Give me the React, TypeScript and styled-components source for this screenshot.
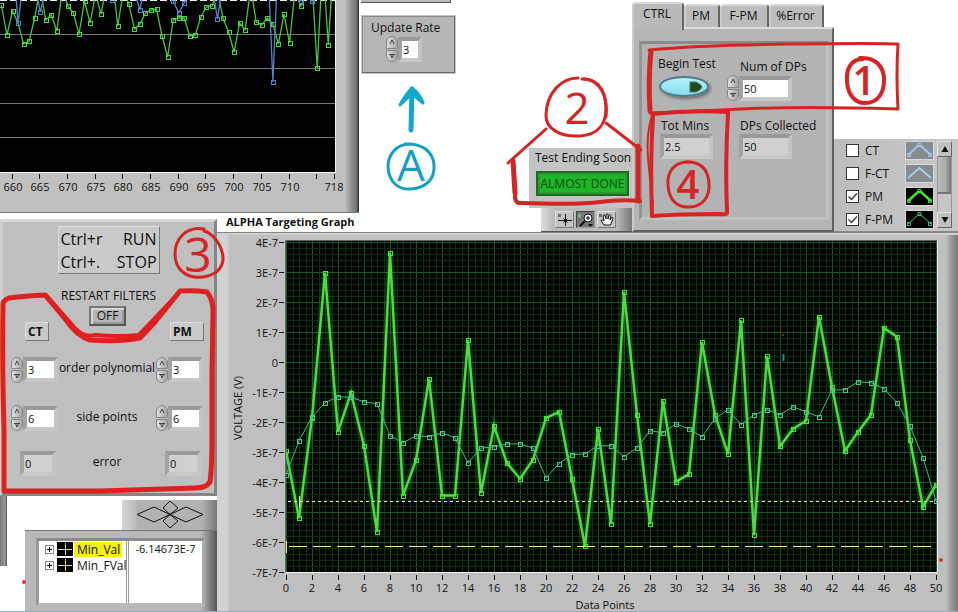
import React, { useState } from "react";
import styled, { createGlobalStyle, css } from "styled-components";

const Global = createGlobalStyle`
  *, *::before, *::after { box-sizing: border-box; }
  body { margin: 0; background: #fff; }
  body, button, input { font-family: "Open Sans", "Noto Sans", sans-serif; font-size: 12px; line-height: 16px; color: #111; }
  button { padding: 0; cursor: pointer; }
`;

const Page = styled.main`
  position: relative;
  display: grid;
  grid-template-columns: 217px 144px minmax(597px, 1fr);
  grid-template-rows: 213px 6px 13px 1fr;
  min-height: 100vh;
  overflow: hidden;
  border-bottom: 1px solid #8fb0d0;
`;

const StripPanel = styled.section`
  grid-column: 1 / 3;
  grid-row: 1;
  margin-right: 2px;
  background: linear-gradient(to right, #c0c0c0 345px, #8c8c8c 352px, #707070 357px, #333 358px);
  border-bottom: 1px solid #777;
`;

const Title = styled.h2`
  grid-column: 2 / 4;
  grid-row: 2 / 4;
  margin: 0;
  padding-left: 9px;
  font-size: 11px;
  line-height: 17px;
  font-weight: 700;
`;

const Upper = styled.div`
  grid-column: 3;
  grid-row: 1 / 4;
  display: flex;
  align-items: flex-end;
  z-index: 1;
`;

const RateColumn = styled.div`
  width: 168px;
  align-self: stretch;
`;

const Sliver = styled.div`
  width: 90px;
  height: 3px;
  margin-bottom: 12px;
  background: #bbb;
  border-bottom: 1px solid #555;
  border-right: 1px solid #555;
`;

const RateBox = styled.section`
  width: 95px;
  height: 59px;
  padding: 3px 8px;
  background: #b5b5b5;
  border: 2px solid;
  border-color: #8a8a8a #6a6a6a #6a6a6a #8a8a8a;
  outline: 1px solid #c4c4c4;
  outline-offset: -1px;
`;

const Label = styled.label<{ $indent?: number }>`
  display: block;
  padding-left: ${(p) => p.$indent ?? 0}px;
  font-size: 12px;
  line-height: 16px;
  white-space: nowrap;
`;

const FieldRow = styled.div<{ $indent?: number }>`
  display: flex;
  align-items: center;
  margin-left: ${(p) => p.$indent ?? 0}px;
`;

const Spinner = styled.span`
  display: flex;
  flex-direction: column;
  gap: 1px;
  width: 12px;
  height: 26px;
`;

const SpinButton = styled.button<{ $down?: boolean }>`
  flex: 1;
  display: flex;
  align-items: center;
  justify-content: center;
  border: 1px solid #858585;
  background: linear-gradient(to right, #ddd, #a5a5a5);
  border-radius: ${(p) => (p.$down ? "1px 1px 6px 6px" : "6px 6px 1px 1px")};
`;

const Input = styled.input<{ $width: number }>`
  width: ${(p) => p.$width}px;
  height: 25px;
  padding: 0 1px;
  font-size: 11px;
  border: 4px solid;
  border-color: #999 #c4c4c4 #c8c8c8 #a2a2a2;
  background: #fff;
  outline: none;
  &:read-only { background: #d0d0d0; }
`;

const StatusColumn = styled.div`
  width: 103px;
  display: flex;
  flex-direction: column;
  align-items: flex-end;
`;

const StatusBox = styled.section`
  width: 103px;
  height: 60px;
  padding: 2px 0 0 6px;
  background: #c3c3c3;
`;

const Led = styled.output`
  display: block;
  width: 93px;
  height: 25px;
  margin: 5px 0 0 1px;
  border: 2px solid #1d6a20;
  background: #20b42a;
  box-shadow: inset 0 0 0 2px #2a9a2e;
  color: #0b4c12;
  line-height: 21px;
  font-size: 12px;
  text-align: center;
  white-space: nowrap;
`;

const Palette = styled.div`
  display: flex;
  gap: 2px;
  width: 91px;
  height: 24px;
  padding: 3px 14px;
  background: linear-gradient(to right, #ddd, #bbb 12px, #bbb 75px, #777);
  border-bottom: 1px solid #555;
`;

const ToolButton = styled.button<{ $on?: boolean }>`
  display: flex;
  width: 19px;
  height: 17px;
  border: 1px solid;
  border-color: ${(p) => (p.$on ? "#444 #999 #999 #444" : "#ddd #777 #777 #ddd")};
  background: ${(p) => (p.$on ? "#777" : "#c4c4c4")};
`;

const TabsColumn = styled.section`
  width: 202px;
  height: 230px;
  display: flex;
  flex-direction: column;
`;

const TabList = styled.div`
  display: flex;
  align-items: flex-end;
  height: 25px;
`;

const Tab = styled.button<{ $width: number; $active?: boolean }>`
  width: ${(p) => p.$width}px;
  height: ${(p) => (p.$active ? 28 : 23)}px;
  align-self: ${(p) => (p.$active ? "flex-start" : "flex-end")};
  padding-right: 2px;
  padding-bottom: ${(p) => (p.$active ? 6 : 1)}px;
  border: solid;
  border-width: 2px 2px 0 2px;
  border-color: #d8d8d8 #666 #d8d8d8 #ccc;
  border-radius: 4px 3px 0 0;
  background: #bcbcbc;
  ${(p) => p.$active && css`z-index: 1; background: #b9b9b9;`}
`;

const TabPanel = styled.div`
  flex: 1;
  padding: 12px 3px 10px 5px;
  background: #b5b5b5;
  border: 2px solid;
  border-color: #ddd #606060 #606060 #ccc;
`;

const TabInner = styled.div`
  display: grid;
  grid-template-columns: 70px 1fr;
  grid-template-rows: 59px 1fr;
  height: 100%;
  padding: 12px 0 0 15px;
  background: #b3b3b3;
  border: 3px solid;
  border-color: #8a8a8a #c2c2c2 #c2c2c2 #949494;
`;

const Cell = styled.div<{ $top?: number }>`
  padding-top: ${(p) => p.$top ?? 0}px;
`;

const OvalButton = styled.button`
  display: flex;
  align-items: center;
  justify-content: flex-end;
  width: 50px;
  height: 21px;
  margin: 4px 0 0 2px;
  padding-right: 4px;
  border: 2px solid #527a82;
  border-radius: 50%;
  background: linear-gradient(#b5f3fb, #83dcec);
  box-shadow: 2px 2px 3px #6f6f6f;
`;

const Legend = styled.section`
  flex: 1;
  display: flex;
  height: 93px;
  background: linear-gradient(to right, #bdbdbd, #c8c8c8);
  border-bottom: 1px solid #888;
`;

const LegendList = styled.div`
  flex: 1;
  padding: 0 3px 0 12px;
`;

const LegendRow = styled.label`
  display: grid;
  grid-template-columns: 19px 1fr 29px;
  align-items: center;
  height: 23px;
`;

const Check = styled.input`
  appearance: none;
  width: 13px;
  height: 13px;
  margin: 0;
  border: 1px solid #333;
  background: #fff;
  &:checked {
    background: #fff url("data:image/svg+xml,%3Csvg xmlns='http://www.w3.org/2000/svg' viewBox='0 0 11 11'%3E%3Cpath d='M1.500 5.500 4.500 8.500 10 2.500' fill='none' stroke='%23333' stroke-width='1.300'/%3E%3C/svg%3E");
  }
`;

const Scroll = styled.div`
  display: flex;
  flex-direction: column;
  width: 21px;
  padding: 2px 6px 3px 0;
`;

const ScrollButton = styled.button`
  display: flex;
  align-items: center;
  justify-content: center;
  height: 16px;
  border: 1px solid;
  border-color: #e2e2e2 #666 #666 #e2e2e2;
  background: #c0c0c0;
`;

const Trough = styled.div`
  flex: 1;
  background: #c6c6c6;
  border: solid #999;
  border-width: 0 1px;
`;

const Thumb = styled.div`
  height: 37px;
  background: linear-gradient(to right, #bbb, #aaa 60%, #777);
  border-bottom: 2px solid #777;
`;

const LeftColumn = styled.div`
  grid-column: 1;
  grid-row: 3 / 5;
  display: flex;
  flex-direction: column;
`;

const FilterPanel = styled.section`
  display: flex;
  flex-direction: column;
  align-items: center;
  height: 277px;
  padding: 4px 10px 0 8px;
  background: #bfbfbf;
  border: 3px solid;
  border-color: #d8d8d8 #858585 #858585 #cfcfcf;
`;

const Keys = styled.div`
  display: grid;
  grid-template-columns: auto auto;
  justify-content: space-between;
  width: 102px;
  height: 48px;
  margin-left: 2px;
  padding: 1px 2px;
  font-size: 16px;
  line-height: 23px;
  background: #cacaca;
  border: 1px solid;
  border-color: #e2e2e2 #777 #777 #ddd;
  white-space: nowrap;
  & > :nth-child(even) { text-align: right; }
`;

const FilterHeading = styled.div`
  margin-top: 14px;
  margin-left: 2px;
  white-space: nowrap;
`;

const OffButton = styled.button`
  width: 37px;
  height: 20px;
  margin-top: 2px;
  border: 2px solid;
  border-color: #777 #555 #555 #777;
  box-shadow: inset 1px 1px 0 1px #d5d5d5, inset -1px -1px 0 1px #999;
  background: #b5b5b5;
`;

const Tags = styled.div`
  display: flex;
  justify-content: space-between;
  width: 100%;
  padding: 0 0 0 14px;
  margin-top: -4px;
`;

const Tag = styled.strong<{ $width: number }>`
  width: ${(p) => p.$width}px;
  height: 19px;
  padding-left: 2px;
  font-size: 12px;
  line-height: 17px;
  background: #cacaca;
  border: 1px solid;
  border-color: #ddd #777 #777 #ddd;
`;

const FilterGrid = styled.div`
  display: grid;
  grid-template-columns: 47px 1fr 48px;
  grid-template-rows: 49px 48px 42px;
  align-items: center;
  width: 100%;
  margin-top: 4px;
  text-align: center;
  white-space: nowrap;
`;

const FilterLabel = styled.span`
  line-height: 16px;
  padding-bottom: 3px;
`;

const Lower = styled.div`
  flex: 1;
  display: flex;
  justify-content: space-between;
`;

const Rail = styled.div`
  width: 7px;
  height: 70px;
  background: linear-gradient(to right, #777, #999 5px, #555);
`;

const CursorColumn = styled.section`
  display: flex;
  flex-direction: column;
  align-items: flex-end;
  width: 192px;
  padding-top: 4px;
`;

const Pad = styled.div`
  display: flex;
  justify-content: center;
  width: 95px;
  height: 30px;
  background: linear-gradient(to right, #d5d5d5, #bcbcbc 14px, #b2b2b2 15px, #b2b2b2 80px, #777);
`;

const CursorBox = styled.div`
  flex: 1;
  width: 100%;
  padding: 7px 12px 5px 11px;
  background: linear-gradient(to right, #b8b8b8 176px, #555);
  border-top: 1px solid #777;
`;

const CursorScreen = styled.div`
  height: 100%;
  background: #fff;
  border: 3px solid;
  border-color: #8a8a8a #aaa #bbb #999;
`;

const CursorTable = styled.table`
  width: 100%;
  height: 100%;
  border-collapse: collapse;
  table-layout: fixed;
  td { padding: 0; height: 16px; font-size: 11px; white-space: nowrap; overflow: hidden; vertical-align: top; }
  td:first-child { width: 88px; border-right: 3px double #999; }
  td:last-child { padding-left: 7px; }
  tr:last-child td { height: 100%; }
`;

const TreeItem = styled.div`
  display: flex;
  align-items: center;
  padding-left: 6px;
  height: 16px;
`;

const Expander = styled.button`
  width: 9px;
  height: 9px;
  flex: none;
  border: 1px solid #888;
  background: #fff;
  display: flex;
`;

const Name = styled.span<{ $on?: boolean }>`
  padding: 0 2px 0 3px;
  margin-left: 1px;
  font-size: 12px;
  line-height: 15px;
  background: ${(p) => (p.$on ? "#f8f010" : "none")};
`;

const GraphPanel = styled.section`
  grid-column: 2 / 4;
  grid-row: 4;
  background: linear-gradient(to right, #d2d2d2, #d2d2d2 10px, #bfbfbf 13px, #bfbfbf calc(100% - 12px), #a0a0a0 calc(100% - 8px), #777);
  border-top: 1px solid #888;
  box-shadow: inset 0 2px 0 #d0d0d0;
`;

const Svg = styled.svg`
  display: block;
  width: 100%;
  height: auto;
  overflow: visible;
`;

const Icon = styled.svg`
  display: block;
  flex: none;
`;

const Ink = styled.svg`
  position: absolute;
  top: 0;
  left: 0;
  z-index: 3;
  pointer-events: none;
`;

const pm = [
  -2.97, -5.21, -1.86, 2.97, -2.33, -1.03, -2.79, -5.67, 3.64, -4.46, -3.27, -0.56, -4.45, -4.45, 0.74, -4.37, -2.14,
  -3.37, -3.89, -3.26, -1.87, -1.66, -3.89, -6.14, -2.23, -5.41, 2.34, -1.76, -5.41, -1.29, -3.99, -3.74, 0.66, -1.76,
  -3.07, 1.39, -5.77, 0.19, -2.81, -2.23, -1.96, 1.51, -0.83, -2.96, -2.33, -1.76, 1.13, 0.84, -2.61, -4.83, -4.09,
];
const fpm = [
  -3.76, -2.63, -1.83, -1.36, -1.16, -1.17, -1.33, -1.39, -2.46, -2.69, -2.46, -2.49, -2.36, -2.53, -3.36, -2.87, -2.83,
  -2.73, -2.73, -2.87, -3.86, -3.39, -3.09, -3.06, -2.79, -2.79, -3.16, -2.86, -2.29, -2.36, -2.06, -2.23, -2.49, -1.89,
  -1.59, -2.09, -1.76, -1.59, -1.76, -1.49, -1.66, -1.83, -0.93, -0.93, -0.66, -0.69, -0.89, -1.36, -2.13, -3.19, -4.63,
];

const stripGreen = [
  5, 35, 11, 23, 44, 41, 18, -12, 20, 15, 31, -10, 6, 13, 34, 1, 23, -6, 14, -16, -24, 26, -9, 4, 29, 24, 13, 10, 9, 36,
  57, 20, 18, 18, 36, 35, 17, 7, 6, -8, 18, 32, 52, 23, 30, -12, 22, 25, 18, 24, 44, 14, 43, -10, 6, -4, -24, 68, -40,
  45, -40,
];
const stripBlue: number[][] = [
  [660, -50, 661, 23, 662, -20],
  [664, -20, 665, 12, 666, -10],
  [677, -4, 678, 0, 679, -5],
  [682, -8, 683, 10, 684, -20],
  [688, -6, 689, 1, 690, 13, 691, 3, 692, -8],
  [696, -16, 697, 19, 698, -18],
  [706, -50, 707, 82, 708, -50],
  [711, -5, 712, 1, 713, -5, 714, 1, 715, -9],
];

const range = (n: number) => Array.from({ length: n }, (_, i) => i);
const gx = (n: number) => 69 + n * 13;
const gy = (v: number) => 129 - v * 30;
const sx = (n: number) => 12.5 + (n - 660) * 5.54;

function StripChart() {
  const green = stripGreen.map((y, i) => [sx(658 + i), y]);
  return (
    <Svg viewBox="0 0 359 212" role="img" aria-label="Voltage history">
      <defs>
        <clipPath id="strip"><rect x="0" y="0" width="335" height="172" /></clipPath>
      </defs>
      <rect x="0" y="0" width="335" height="172" fill="#000" />
      <g clipPath="url(#strip)" shapeRendering="crispEdges">
        {[34.5, 68.5, 103.5, 137.5].map((y) => <path key={y} d={`M0 ${y}H335`} stroke="#777" />)}
        <path d="M0 .5H335" stroke="#eee" strokeDasharray="7 3" />
      </g>
      <g clipPath="url(#strip)" fill="none">
        <polyline points={green.map((p) => p.join()).join(" ")} stroke="#4cc344" strokeWidth="1.3" />
        {green.map(([x, y]) => <rect key={x} x={Math.round(x) - 2 + 0.5} y={y - 1.5} width="4" height="4" stroke="#4fd545" />)}
        {stripBlue.map((s) => {
          const pts = range(s.length / 2).map((i) => [sx(s[i * 2]), s[i * 2 + 1]]);
          return (
            <g key={s[0]} stroke="#5684c8">
              <polyline points={pts.map((p) => p.join()).join(" ")} strokeWidth="1.3" />
              {pts.map(([x, y]) => <rect key={x} x={Math.round(x) - 1.5} y={y - 1.5} width="4" height="4" />)}
            </g>
          );
        })}
      </g>
      <path d="M0 172.5H335.5V0" stroke="#f2f2f2" fill="none" />
      {range(12).map((i) => <path key={i} d={`M${Math.round(sx(660 + i * 5)) - 0.5} 174v5`} stroke="#111" />)}
      <path d="M334.5 174v5" stroke="#111" />
      <g fontSize="11" textAnchor="middle" fill="#111">
        {range(11).map((i) => <text key={i} x={Math.round(sx(660 + i * 5))} y="191">{660 + i * 5}</text>)}
        <text x="334" y="191">718</text>
      </g>
    </Svg>
  );
}

function TargetGraph() {
  const line = (d: number[]) => d.map((v, i) => `${gx(i)},${gy(v)}`).join(" ");
  return (
    <Svg viewBox="0 0 741 378" role="img" aria-label="ALPHA Targeting Graph">
      <defs>
        <clipPath id="plot"><rect x="69" y="8" width="651" height="331" /></clipPath>
      </defs>
      <rect x="69" y="8" width="651" height="331" fill="#000502" />
      <g shapeRendering="crispEdges">
        {range(101).map((i) => <path key={i} d={`M${69.5 + i * 6.5} 8V339`} stroke={i % 4 ? "#102e12" : "#1f5626"} />)}
        {range(56).map((i) => <path key={i} d={`M69 ${9.5 + i * 6}H720`} stroke={i % 5 ? "#102e12" : "#1f5626"} />)}
      </g>
      <path d="M68.5 339V7.5H720" stroke="#666" fill="none" />
      <path d="M720.5 8V339.5H69" stroke="#eee" fill="none" />
      <g clipPath="url(#plot)" fill="none">
        <polyline points={line(pm)} stroke="#36e029" strokeOpacity=".16" strokeWidth="7" />
        <polyline points={line(pm)} stroke="#4fd944" strokeWidth="2.5" />
        {pm.map((v, i) => <rect key={i} x={gx(i) - 1.5} y={Math.round(gy(v)) - 1.5} width="4" height="4" stroke="#43e738" />)}
        <polyline points={line(fpm)} stroke="#48b779" />
        {fpm.map((v, i) => <rect key={i} x={gx(i) - 1.5} y={Math.round(gy(v)) - 1.5} width="4" height="4" stroke="#4ac783" />)}
        <g stroke="#f2f59a">
          <path d="M71 268.5H720" strokeDasharray="3 3" />
          <path d="M82.5 263v12M69.5 308v12" />
          <path d="M72 313.5H720" strokeDasharray="18 6" />
        </g>
      </g>
      <g stroke="#111">
        {range(12).map((i) => <path key={i} d={`M62 ${9.5 + i * 30}h5`} />)}
        {range(26).map((i) => <path key={i} d={`M${69.5 + i * 26} 342v5`} />)}
      </g>
      <g fontSize="11" fill="#111">
        {range(12).map((i) => (
          <text key={i} x="61" y={14 + i * 30} textAnchor="end">{i === 4 ? "0" : `${4 - i}E-7`}</text>
        ))}
        {range(26).map((i) => <text key={i} x={69 + i * 26} y="359" textAnchor="middle">{i * 2}</text>)}
        <text x="388" y="376" textAnchor="middle">Data Points</text>
        <text x="25" y="175" textAnchor="middle" transform="rotate(-90 25 175)">VOLTAGE (V)</text>
      </g>
      <path d="M566.5 121v7" stroke="#168aa8" strokeWidth="2" />
      <circle cx="566" cy="102" r="1" fill="#a33322" />
    </Svg>
  );
}

type FieldProps = { id: string; label: string; value: string; width: number; fixed?: boolean; indent?: number };

function NumberField({ id, label, value, width, fixed, indent }: FieldProps) {
  const [v, setV] = useState(value);
  const step = (d: number) => setV(String(Number(v) + d));
  return (
    <FieldRow $indent={indent}>
      {!fixed && (
        <Spinner>
          <SpinButton aria-label={`Increase ${label}`} onClick={() => step(1)}>
            <Icon width="6" height="6" viewBox="0 0 6 6"><path d="M1 5 3 1l2 4" fill="none" stroke="#444" /></Icon>
          </SpinButton>
          <SpinButton $down aria-label={`Decrease ${label}`} onClick={() => step(-1)}>
            <Icon width="6" height="6" viewBox="0 0 6 6"><path d="M0 1.500h6M1.500 1.500 3 5l1.500-3.500" fill="none" stroke="#444" /></Icon>
          </SpinButton>
        </Spinner>
      )}
      <Input id={id} aria-label={label} $width={width} value={v} readOnly={fixed} onChange={(e) => setV(e.target.value)} />
    </FieldRow>
  );
}

const plots = [
  { name: "CT", on: false, bg: "#858b8f", fg: "#a5c5e8", w: 2, dots: true },
  { name: "F-CT", on: false, bg: "#858b8f", fg: "#a5d5e8", w: 2, dots: false },
  { name: "PM", on: true, bg: "#000", fg: "#46e03c", w: 2.5, dots: true },
  { name: "F-PM", on: true, bg: "#000", fg: "#48bd78", w: 1, dots: true },
];

function PlotLegend() {
  return (
    <Legend aria-label="Plots">
      <LegendList>
        {plots.map((p) => (
          <LegendRow key={p.name}>
            <Check type="checkbox" defaultChecked={p.on} />
            <span>{p.name}</span>
            <Icon width="29" height="19" viewBox="0 0 29 19">
              <rect x=".5" y=".5" width="28" height="18" fill={p.bg} stroke="#d8d8d8" />
              <path d={p.dots ? "M3 14 13 5h3l10 9" : "M3 14 14.500 4 26 14"} fill="none" stroke={p.fg} strokeWidth={p.w} />
              {p.dots && <path d="M2.500 12.500h3v3h-3zM13 2.500h3v3h-3zM23.500 12.500h3v3h-3z" fill="none" stroke={p.fg} />}
            </Icon>
          </LegendRow>
        ))}
      </LegendList>
      <Scroll>
        <ScrollButton aria-label="Scroll up">
          <Icon width="8" height="8" viewBox="0 0 8 8"><path d="M4 1 7.500 7h-7z" fill="#111" /></Icon>
        </ScrollButton>
        <Trough><Thumb /></Trough>
        <ScrollButton aria-label="Scroll down">
          <Icon width="8" height="8" viewBox="0 0 8 8"><path d="M.5 1h7L4 7z" fill="#111" /></Icon>
        </ScrollButton>
      </Scroll>
    </Legend>
  );
}

function Annotations() {
  return (
    <Ink width="958" height="612" viewBox="0 0 958 612" fill="none" strokeLinecap="round" strokeLinejoin="round">
      <g stroke="#d42524" strokeWidth="3">
        <path d="M649 50 Q700 45 790 44 T898 44 Q896 75 898 109 Q800 106 740 109 T650 113" />
        <path d="M651 51 Q648 80 650 111" strokeWidth="5" />
        <path d="M652 114 Q690 110 728 112" strokeWidth="4" />
        <path d="M728 113 Q725 165 727 212 Q728 215 720 214 Q680 214 652 216 Q650 160 653 116" strokeWidth="4" />
        <path d="M652 115 Q646 135 648 158 T653 205" strokeWidth="2" />
        <path d="M863 59 C850 59 846 70 847 82 C848 95 855 103 865 103 C878 103 884 93 884 80 C884 67 876 57 860 58" strokeWidth="4" />
        <path d="M690 162 C674 161 667 172 668 185 C669 200 677 208 690 207 C703 206 710 197 709 183 C708 169 701 161 685 162" />
        <path d="M578 78 C561 78 547 93 546 114 C545 130 562 137 580 136 C598 135 606 124 606 108 C606 90 595 78 582 79" />
        <path d="M584 79 C600 79 608 95 606 117 M546 129 508 163 M606 123 641 150" />
        <path d="M513 161 515 193 M638 146 638 201" strokeWidth="5" />
        <path d="M515 193 Q514 203 520 203 Q580 205 600 202 T640 201" strokeWidth="4" />
        <path d="M204 229 C186 226 175 239 175 254 C175 270 187 279 203 277 C218 275 226 265 222 252 C220 243 212 233 204 231" />
      </g>
      <g stroke="#df2020" strokeWidth="5">
        <path d="M3 306 Q2 301 9 298 Q25 296 45 295 L66 320 Q77 336 90 340 Q120 342 140 338 L155 322 L180 291 Q195 290 207 292 Q213 300 213 310 L212 375 L212 440 Q212 468 210 482 Q206 488 195 488 L100 491 Q35 491 4 491 L4 430 Q2 360 3 306" />
        <path d="M46 295L75 328 Q84 338 95 335 Q120 337 139 335 L158 315 L178 294" strokeWidth="4" />
      </g>
      <g stroke="#159fc0" strokeWidth="3">
        <path d="M410 144 C396 144 388 155 388 167 C389 182 398 190 411 189 C427 188 435 178 434 165 C433 152 423 143 405 144" />
        <path d="M411 130 412 89" stroke="#12a8ce" strokeWidth="5" />
        <path d="M400 105 Q405 95 412 88 Q420 94 423 103 L412 94 Z" stroke="#12a8ce" fill="#12a8ce" />
      </g>
      <g fontFamily="Open Sans, Noto Sans, sans-serif" fontSize="44" textAnchor="middle" fill="#d42524">
        <text x="577" y="124">2</text>
        <text x="864" y="95" fontSize="40" fontWeight="600">1</text>
        <text x="688" y="199" fontSize="40" fontWeight="600">4</text>
        <text x="198" y="272" fontSize="48">3</text>
        <text x="411" y="181" fill="#159fc0">A</text>
      </g>
      <circle cx="24" cy="582" r="2" fill="#d33" />
      <circle cx="941" cy="560" r="2" fill="#d33" />
    </Ink>
  );
}

export default function App() {
  const [tab, setTab] = useState("CTRL");
  const tabs = [["CTRL", 52], ["PM", 36], ["F-PM", 49], ["%Error", 55]] as const;
  const cursorNames = ["Min_Val", "Min_FVal"];
  return (
    <>
      <Global />
      <Page>
        <StripPanel><StripChart /></StripPanel>
        <Title>ALPHA Targeting Graph</Title>

        <Upper>
          <RateColumn>
            <Sliver />
            <RateBox>
              <Label htmlFor="rate">Update Rate</Label>
              <NumberField id="rate" label="Update Rate" value="3" width={24} indent={15} />
            </RateBox>
          </RateColumn>

          <StatusColumn>
            <StatusBox>
              <Label as="div">Test Ending Soon</Label>
              <Led>ALMOST DONE</Led>
            </StatusBox>
            <Palette>
              <ToolButton aria-label="Cursor">
                <Icon width="17" height="15" viewBox="0 0 17 15">
                  <path d="M2 2h3v3H2z" fill="#5e7a5a" /><path d="M2 8.500h14M9.500 2v12M7.500 6.500l4 4M11.500 6.500l-4 4" stroke="#111" />
                </Icon>
              </ToolButton>
              <ToolButton $on aria-label="Zoom">
                <Icon width="17" height="15" viewBox="0 0 17 15" fill="none">
                  <circle cx="11" cy="6" r="4" fill="#e8eef4" stroke="#111" /><path d="M8 9l-5 5" stroke="#111" strokeWidth="2" />
                  <path d="M9 6h4M11 4v4" stroke="#111" /><path d="M1 4h3M2.500 2.500v3" stroke="#5f5" /><path d="M11 12h5l-2.500 3z" fill="#111" />
                </Icon>
              </ToolButton>
              <ToolButton aria-label="Pan">
                <Icon width="17" height="15" viewBox="0 0 17 15">
                  <path d="M1 2h3v3H1z" fill="#5e7a5a" />
                  <path d="M6 13 3 8.500Q4 7 6 9L5 3.500Q6 2 7 3.500L8 7V2.500Q9 1 10 2.500V7l1-4q1.500-1 2 .5L12 8l1.500-2.500q1.500-.5 1.500 1L12.500 13z" fill="#fff" stroke="#111" />
                </Icon>
              </ToolButton>
            </Palette>
          </StatusColumn>

          <TabsColumn>
            <TabList role="tablist">
              {tabs.map(([name, width]) => (
                <Tab key={name} role="tab" aria-selected={tab === name} $width={width} $active={tab === name} onClick={() => setTab(name)}>
                  {name}
                </Tab>
              ))}
            </TabList>
            <TabPanel role="tabpanel">
              <TabInner>
                <Cell>
                  <Label htmlFor="begin" $indent={1}>Begin Test</Label>
                  <OvalButton id="begin" aria-label="Begin Test">
                    <Icon width="14" height="12" viewBox="0 0 14 12"><path d="M1 1h6q5 2 6 5-1 3-6 5H1z" fill="#234a1c" stroke="#4b7a5b" /></Icon>
                  </OvalButton>
                </Cell>
                <Cell $top={3}>
                  <Label htmlFor="num" $indent={13}>Num of DPs</Label>
                  <NumberField id="num" label="Num of DPs" value="50" width={53} />
                </Cell>
                <Cell $top={3}>
                  <Label htmlFor="mins" $indent={4}>Tot Mins</Label>
                  <NumberField id="mins" label="Tot Mins" value="2.5" width={53} fixed indent={3} />
                </Cell>
                <Cell $top={3}>
                  <Label htmlFor="dps" $indent={13}>DPs Collected</Label>
                  <NumberField id="dps" label="DPs Collected" value="50" width={53} fixed indent={12} />
                </Cell>
              </TabInner>
            </TabPanel>
          </TabsColumn>

          <PlotLegend />
        </Upper>

        <LeftColumn>
          <FilterPanel>
            <Keys><span>Ctrl+r</span><span>RUN</span><span>Ctrl+.</span><span>STOP</span></Keys>
            <FilterHeading id="restart">RESTART FILTERS</FilterHeading>
            <OffButton aria-describedby="restart">OFF</OffButton>
            <Tags><Tag $width={24}>CT</Tag><Tag $width={34}>PM</Tag></Tags>
            <FilterGrid>
              <NumberField id="ct-order" label="CT order polynomial" value="3" width={35} />
              <FilterLabel>order polynomial</FilterLabel>
              <NumberField id="pm-order" label="PM order polynomial" value="3" width={35} />
              <NumberField id="ct-side" label="CT side points" value="6" width={35} />
              <FilterLabel>side points</FilterLabel>
              <NumberField id="pm-side" label="PM side points" value="6" width={35} />
              <NumberField id="ct-error" label="CT error" value="0" width={36} fixed indent={9} />
              <FilterLabel>error</FilterLabel>
              <NumberField id="pm-error" label="PM error" value="0" width={36} fixed indent={9} />
            </FilterGrid>
          </FilterPanel>
          <Lower>
            <Rail />
            <CursorColumn>
              <Pad>
                <Icon width="68" height="28" viewBox="0 0 68 28" fill="none" stroke="#111">
                  <path d="M1 14.500 18 7l16 7.500L18 22zM67 14.500 50 7l-16 7.500L50 22zM34 1l8 7-8 6.500L27 8zM34 28l8-7-8-6.500L27 21z" />
                </Icon>
              </Pad>
              <CursorBox>
                <CursorScreen>
                  <CursorTable>
                    <tbody>
                      {cursorNames.map((name, i) => (
                        <tr key={name}>
                          <td>
                            <TreeItem>
                              <Expander aria-label={`Expand ${name}`}>
                                <Icon width="7" height="7" viewBox="0 0 7 7"><path d="M1 3.500h5M3.500 1v5" stroke="#111" /></Icon>
                              </Expander>
                              <Icon width="19" height="14" viewBox="0 0 19 14">
                                <path d="M3 0h16v14H3z" fill="#000" /><path d="M4 7.500h14M11.500 1v12" stroke="#e9df7d" />
                              </Icon>
                              <Name $on={i === 0}>{name}</Name>
                            </TreeItem>
                          </td>
                          <td>{i === 0 ? "-6.14673E-7" : ""}</td>
                        </tr>
                      ))}
                      <tr><td /><td /></tr>
                    </tbody>
                  </CursorTable>
                </CursorScreen>
              </CursorBox>
            </CursorColumn>
          </Lower>
        </LeftColumn>

        <GraphPanel><TargetGraph /></GraphPanel>
        <Annotations />
      </Page>
    </>
  );
}
